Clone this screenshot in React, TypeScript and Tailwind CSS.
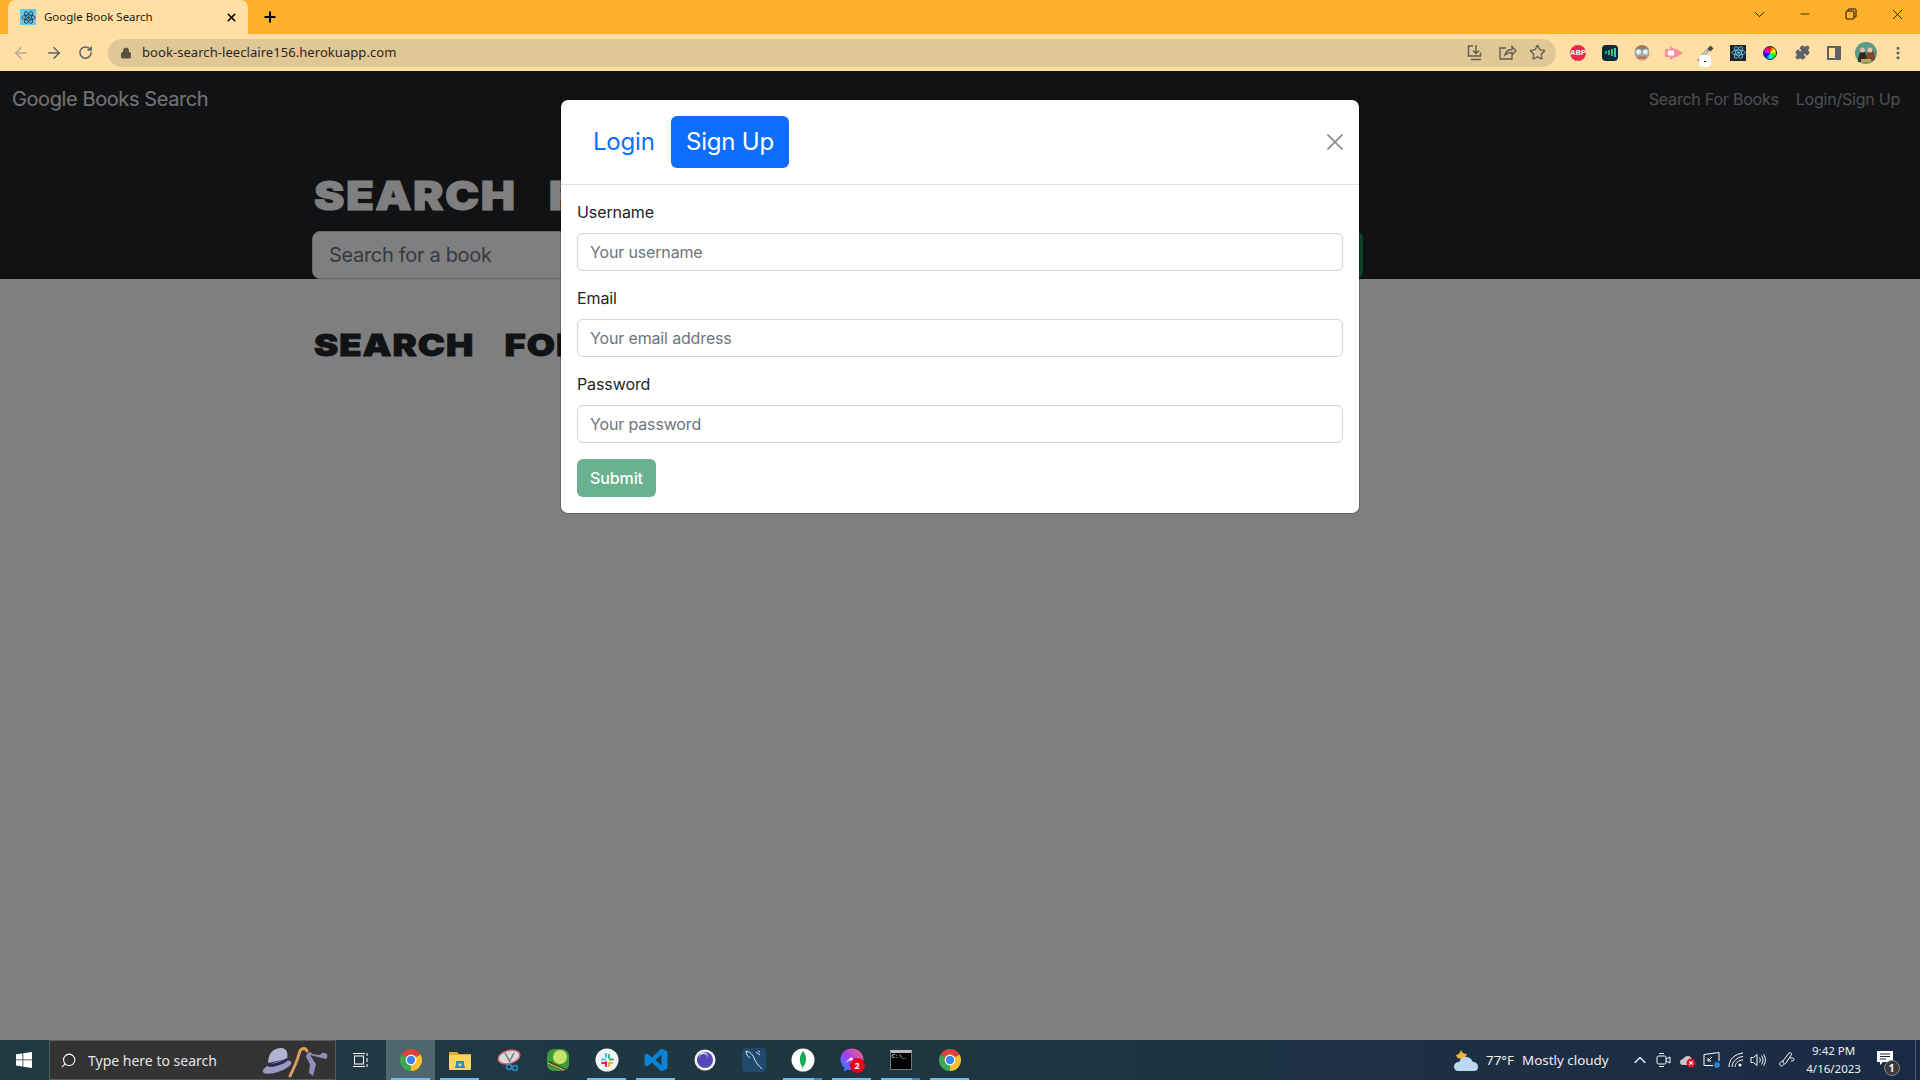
import React from "react";
import { ArrowLeft, ArrowRight, RotateCw, Lock, Star, X, Plus, Minus, ChevronDown, ChevronUp, Search, Puzzle, MoreVertical } from "lucide-react";

const Atom = ({ color, size = 16 }: { color: string; size?: number }) => (
  <svg width={size} height={size} viewBox="0 0 24 24" fill="none" stroke={color} strokeWidth="1.3">
    <ellipse cx="12" cy="12" rx="10.5" ry="4.2" />
    <ellipse cx="12" cy="12" rx="10.5" ry="4.2" transform="rotate(60 12 12)" />
    <ellipse cx="12" cy="12" rx="10.5" ry="4.2" transform="rotate(120 12 12)" />
    <circle cx="12" cy="12" r="2" fill={color} stroke="none" />
  </svg>
);

const ChromeLogo = () => (
  <svg width="24" height="24" viewBox="0 0 24 24">
    <path d="M12 12L2.47 6.5A11 11 0 0 1 21.53 6.5Z" fill="#db4437" />
    <path d="M12 12L21.53 6.5A11 11 0 0 1 12 23Z" fill="#fbc02d" />
    <path d="M12 12L12 23A11 11 0 0 1 2.47 6.5Z" fill="#3da751" />
    <circle cx="12" cy="12" r="5.4" fill="#fff" />
    <circle cx="12" cy="12" r="4.2" fill="#3f84ea" />
  </svg>
);

const Ext = ({ children }: { children: React.ReactNode }) => (
  <div className="relative w-8 h-full flex items-center justify-center">{children}</div>
);

const Toolbar = () => (
  <div className="h-[37px] bg-[#ffdfa3] flex items-center shrink-0">
    <div className="w-[108px] flex items-center pl-[12px] gap-[15px] shrink-0">
      <ArrowLeft size={18} className="text-[#b5aa94]" strokeWidth={2} />
      <ArrowRight size={18} className="text-[#5f6368]" strokeWidth={2} />
      <RotateCw size={15} className="text-[#5f6368]" strokeWidth={2.4} />
    </div>
    <div className="w-[1448px] h-7 rounded-full bg-[#dfc796] flex items-center pl-[12px] pr-[10px] shrink-0">
      <Lock size={12} className="text-[#5a5240] mr-[10px]" fill="#5a5240" />
      <span className="text-[13px] tracking-[0.06px] text-[#2b2618] font-['Noto_Sans','Open_Sans',sans-serif]">book-search-leeclaire156.herokuapp.com</span>
      <div className="ml-auto flex items-center gap-[12px] text-[#5f5a4d]">
        <svg width="20" height="20" viewBox="0 0 20 20" fill="none" stroke="currentColor" strokeWidth="1.4">
          <path d="M8 3H3.5v10h12V9.5M11 2v8M8 7.5l3 3 3-3M6 16.5h10" />
        </svg>
        <svg width="20" height="20" viewBox="0 0 20 20" fill="none" stroke="currentColor" strokeWidth="1.3">
          <path d="M9 5H3v11h12v-4M8 12c1-4 4-5.500 7-5.500V3.500l4 4.500-4 4V9.500c-2.500 0-5 .5-7 2.500Z" />
        </svg>
        <Star size={17} strokeWidth={1.8} />
      </div>
    </div>
    <div className="flex items-center h-full pl-[6px]">
      <Ext>
        <div className="w-4 h-4 rounded-full bg-[#f0274b] text-white text-[7.5px] font-bold flex items-center justify-center font-['Liberation_Sans',sans-serif]">ABP</div>
      </Ext>
      <Ext>
        <div className="w-4 h-4 rounded-sm bg-[#0d2b3e] flex items-center justify-center gap-px">
          <div className="w-[2px] h-[3px] bg-[#1fa67a]" />
          <div className="w-[2px] h-[5px] bg-[#2bb98a]" />
          <div className="w-[2px] h-[7px] bg-[#34c08f]" />
          <div className="w-[2px] h-[9px] bg-[#52c69a]" />
        </div>
      </Ext>
      <Ext>
        <svg width="18" height="18" viewBox="0 0 18 18">
          <circle cx="9" cy="9" r="7.5" fill="#c9977a" />
          <path d="M2 7a7 6 0 0 1 14 0Z" fill="#9b7a60" />
          <circle cx="5.600" cy="8" r="3" fill="#e6f2f2" stroke="#7fb4c4" strokeWidth="1" />
          <circle cx="12.400" cy="8" r="3" fill="#e6f2f2" stroke="#7fb4c4" strokeWidth="1" />
          <path d="M5 13.500h8" stroke="#a86a55" strokeWidth="1.500" />
        </svg>
      </Ext>
      <Ext>
        <svg width="18" height="14" viewBox="0 0 18 14">
          <path d="M0 3h5V0l5 3h2l6 4-6 4h-2l-5 3v-3H0Z" fill="#ff8f9c" />
          <path d="M3 4.500h6v5H3Z" fill="#fff" />
        </svg>
      </Ext>
      <Ext>
        <svg width="18" height="18" viewBox="0 0 18 18" fill="none">
          <path d="M2 16L11 6" stroke="#9a9a9a" strokeWidth="3" strokeLinecap="round" />
          <path d="M3 15L10 7" stroke="#fff" strokeWidth="1" />
          <path d="M10.500 4.500l3-3 3 3-3 3Z" fill="#4a4a4a" />
        </svg>
        <div className="absolute left-[9px] top-[21px] w-3 h-3 rounded-sm bg-white flex items-center justify-center">
          <div className="w-[2px] h-px bg-black" />
        </div>
      </Ext>
      <Ext>
        <div className="w-4 h-4 bg-[#20232a] flex items-center justify-center">
          <Atom color="#61dafb" size={15} />
        </div>
      </Ext>
      <Ext>
        <div className="w-[14px] h-[14px] rounded-full bg-[conic-gradient(#f00,#ff0,#0f0,#0ff,#00f,#f0f,#f00)] border border-[#222]" />
      </Ext>
      <Ext>
        <Puzzle size={15} className="text-[#5f6368]" fill="#5f6368" />
      </Ext>
      <Ext>
        <div className="w-[14px] h-[14px] border-[2px] border-r-[6px] border-[#5f6368]" />
      </Ext>
      <Ext>
        <svg width="22" height="22" viewBox="0 0 22 22">
          <circle cx="11" cy="11" r="11" fill="#5d9a86" />
          <path d="M3 20c0-6 2-11 5-11s4 4 4 11Z" fill="#2d2a26" />
          <path d="M11 20c0-7 2-13 5-13s4 6 4 11Z" fill="#7a4a2c" />
          <circle cx="7.500" cy="8" r="2.500" fill="#e3bd9f" />
          <circle cx="15" cy="8" r="2.500" fill="#e8c6a8" />
          <path d="M6 20h10v-3H6Z" fill="#c9a24a" />
        </svg>
      </Ext>
      <Ext>
        <MoreVertical size={16} className="text-[#5f6368]" strokeWidth={2.6} />
      </Ext>
    </div>
  </div>
);

const TabStrip = () => (
  <div className="h-[34px] bg-[#ffb12c] flex items-end shrink-0 pl-2 text-black">
    <div className="w-[240px] h-[34px] bg-[#ffdfa3] rounded-t-lg flex items-center pl-3 pr-2">
      <div className="w-4 h-4 bg-[#5fc8ec] flex items-center justify-center">
        <Atom color="#20323c" size={15} />
      </div>
      <span className="ml-2 text-[11.5px] text-[#1d1a12] font-['Noto_Sans','Open_Sans',sans-serif]">Google Book Search</span>
      <X size={13} className="ml-auto mr-[2px]" strokeWidth={3} />
    </div>
    <div className="h-[34px] flex items-center ml-[14px]">
      <Plus size={16} strokeWidth={3} />
    </div>
    <div className="ml-auto h-full flex items-center pb-[6px] text-[#111111]">
      <div className="w-[46px] flex justify-center"><ChevronDown size={17} strokeWidth={1.3} /></div>
      <div className="w-[46px] flex justify-center"><Minus size={14} strokeWidth={1.4} /></div>
      <div className="w-[46px] flex justify-center">
        <svg width="12" height="12" viewBox="0 0 12 12" fill="none" stroke="currentColor" strokeWidth="1">
          <rect x="1" y="3" width="8" height="8" rx="1" />
          <path d="M3 3V1.500A.5.5 0 0 1 3.500 1H10.500A.5.5 0 0 1 11 1.500V8.500A.5.5 0 0 1 10.500 9H9" />
        </svg>
      </div>
      <div className="w-[46px] flex justify-center"><X size={17} strokeWidth={1.2} /></div>
    </div>
  </div>
);

const PageBehind = () => (
  <div className="h-full bg-white font-['Inter',sans-serif]">
    <div className="h-[208px] bg-[#212529] overflow-hidden">
      <nav className="h-[56px] flex items-center justify-between pl-3 pr-[20px]">
        <span className="text-[20px] tracking-[-0.4px] text-white/90">Google Books Search</span>
        <div className="flex gap-[17px] text-[16px] tracking-[-0.22px] text-white/55">
          <span>Search For Books</span>
          <span>Login/Sign Up</span>
        </div>
      </nav>
      <div className="w-[1064px] ml-[314px]">
        <h1 className="text-[40px] leading-[48px] font-black text-white tracking-[1.2px] [word-spacing:19px] mt-[45px] mb-[11px] origin-left scale-x-[1.145] [-webkit-text-stroke:1px_white] whitespace-nowrap">SEARCH FOR BOOKS!</h1>
        <div className="flex -ml-[2px] w-[1051px] h-[48px]">
          <div className="flex-1 bg-white border border-[#ced4da] rounded-l-lg flex items-center pl-4 text-[20px] tracking-[-0.32px] text-[#6c757d]">Search for a book</div>
          <div className="w-[120px] bg-[#198754] rounded-r-lg" />
        </div>
      </div>
    </div>
    <h2 className="ml-[314px] mt-[48px] text-[30px] leading-[36px] font-black text-[#212529] tracking-[0.8px] [word-spacing:18px] origin-left scale-x-[1.215] [-webkit-text-stroke:0.8px_#212529] whitespace-nowrap">SEARCH FOR A BOOK TO BEGIN</h2>
  </div>
);

const Field = ({ label, placeholder }: { label: string; placeholder: string }) => (
  <div className="mb-4">
    <label className="block text-[16px] leading-[23px] mb-[9px] tracking-[-0.1px] text-[#212529]">{label}</label>
    <input
      readOnly
      placeholder={placeholder}
      className="block w-full h-[38px] px-3 text-[16px] tracking-[-0.15px] border border-[#ced4da] rounded-md placeholder:text-[#6c757d] outline-none bg-white"
    />
  </div>
);

const Modal = () => (
  <div className="absolute inset-0 bg-black/50 flex justify-center items-start pt-[28px] font-['Inter',sans-serif]">
    <div className="w-[800px] bg-white bg-clip-padding border border-black/20 rounded-lg">
      <div className="flex items-center justify-between p-4 border-b border-[#dee2e6]">
        <div className="flex text-[24px] tracking-[-0.2px]">
          <div className="h-[52px] w-[94px] pl-4 flex items-center text-[#0d6efd]">Login</div>
          <div className="h-[52px] w-[118px] flex items-center justify-center text-white bg-[#0d6efd] rounded-md">Sign Up</div>
        </div>
        <svg width="16" height="16" viewBox="0 0 16 16" fill="none" stroke="#8a8a8a" strokeWidth="1.6">
          <path d="M.5.5l15 15M15.500.5l-15 15" />
        </svg>
      </div>
      <div className="p-4">
        <Field label="Username" placeholder="Your username" />
        <Field label="Email" placeholder="Your email address" />
        <Field label="Password" placeholder="Your password" />
        <button className="h-[38px] w-[79px] rounded-md bg-[#198754]/65 text-white text-[16px] font-medium tracking-[-0.1px]">Submit</button>
      </div>
    </div>
  </div>
);

const TaskItem = ({ children, line, active, split }: { children?: React.ReactNode; line?: boolean; active?: boolean; split?: boolean }) => (
  <div className={`relative w-[49px] h-full flex items-center justify-center shrink-0 ${active ? "bg-[#4f666d]" : ""}`}>
    {children}
    {line && <div className="absolute bottom-0 left-[5px] right-[5px] h-[2px] bg-[#76b9ed]" />}
    {split && <div className="absolute bottom-0 right-[5px] w-[8px] h-[2px] bg-[#4a86b0]" />}
  </div>
);

const Taskbar = () => (
  <div className="h-10 shrink-0 flex items-center text-white bg-gradient-to-r from-[#203943] via-[#1f3641] to-[#1a2a44] font-['Noto_Sans','Open_Sans',sans-serif]">
    <div className="w-[48px] h-full flex items-center justify-center shrink-0">
      <svg width="16" height="16" viewBox="0 0 16 16" fill="#fff">
        <path d="M0 2.300L6.500 1.400V7.500H0ZM7.300 1.300L16 0V7.500H7.300ZM0 8.300H6.500V14.500L0 13.600ZM7.300 8.300H16V16L7.300 14.700Z" />
      </svg>
    </div>
    <div className="ml-px w-[287px] h-full bg-[#333333] border border-[#5a5a5a] flex items-center pl-[10px] relative shrink-0">
      <Search size={17} className="text-white -scale-x-100" strokeWidth={1.5} />
      <span className="ml-[11px] text-[14px] text-[#e6e6e6]">Type here to search</span>
      <svg className="absolute right-[5px] top-[2px]" width="68" height="36" viewBox="0 0 68 36" fill="none">
        <ellipse cx="15" cy="24" rx="15" ry="5" fill="#9a99c4" transform="rotate(-18 15 24)" />
        <path d="M6 20c0-10 6-15 13-15s7 7 6 11Z" fill="#b3b2d3" />
        <path d="M6 21c6 0 13-2 19-6l.5 3c-6 4-13 6-19 6Z" fill="#2a2a55" />
        <path d="M28 33c3-6 7-14 9-22 1-6 6-7 8-3" stroke="#d6a05c" strokeWidth="3" strokeLinecap="round" />
        <path d="M48 12l6 9-3 12-4-3 1-9-4-7c0-3 2-4 4-5l15 1c3 1 3 4 1 6Z" fill="#8e8eb8" />
        <path d="M48 8l11 1c1 1 0 3-2 3l-7-1Z" fill="#333333" />
      </svg>
    </div>
    <div className="w-[50px] h-full flex items-center justify-center shrink-0">
      <svg width="16" height="16" viewBox="0 0 16 16" fill="none" stroke="#fff" strokeWidth="1">
        <rect x="1.500" y="4" width="9" height="8" />
        <path d="M0 1.500h12M0 14.500h12M14 1v3M14 6v4M14 12v3" />
      </svg>
    </div>
    <TaskItem active line><ChromeLogo /></TaskItem>
    <TaskItem line>
      <svg width="22" height="20" viewBox="0 0 22 20">
        <path d="M0 2h8l2 2h12v3H0Z" fill="#e5ad2c" />
        <rect x="0" y="5" width="22" height="15" rx="1" fill="#fcd462" />
        <path d="M7 16v-5h8v5h-2.500v-2.500h-3V16Z" fill="#2f88d0" />
        <rect x="6" y="16" width="10" height="2" fill="#2f88d0" />
      </svg>
    </TaskItem>
    <TaskItem>
      <svg width="24" height="24" viewBox="0 0 24 24" fill="none">
        <ellipse cx="12" cy="9" rx="11" ry="6.500" fill="#d9d9d9" stroke="#d9606a" strokeWidth="1.500" transform="rotate(-15 12 9)" />
        <path d="M8 5l5 9M17 5l-5 9" stroke="#777" strokeWidth="1.500" />
        <circle cx="12" cy="19" r="2.500" stroke="#2f8ec9" strokeWidth="1.500" />
        <circle cx="18" cy="20" r="2.500" stroke="#2f8ec9" strokeWidth="1.500" />
      </svg>
    </TaskItem>
    <TaskItem>
      <svg width="24" height="24" viewBox="0 0 24 24">
        <rect x="1" y="1" width="22" height="22" rx="7" fill="#3a9d3a" />
        <circle cx="14" cy="9" r="7" fill="#c8e46a" />
        <path d="M3 13l17 8-2 2L2 16Z" fill="#5a3d1e" />
        <path d="M2 15l16 7" stroke="#e5d28a" strokeWidth="1" />
      </svg>
    </TaskItem>
    <TaskItem line>
      <svg width="24" height="24" viewBox="0 0 24 24">
        <circle cx="12" cy="12" r="11.500" fill="#f4f4f4" />
        <rect x="6" y="10.500" width="5" height="2" rx="1" fill="#36c5f0" />
        <rect x="10" y="5" width="2" height="5" rx="1" fill="#36c5f0" />
        <rect x="13" y="6" width="2" height="5" rx="1" fill="#2eb67d" />
        <rect x="14" y="10.500" width="5" height="2" rx="1" fill="#2eb67d" />
        <rect x="13" y="14" width="5" height="2" rx="1" fill="#ecb22e" />
        <rect x="13" y="14" width="2" height="5" rx="1" fill="#ecb22e" />
        <rect x="10" y="13" width="2" height="6" rx="1" fill="#e01e5a" />
        <rect x="6" y="14" width="5" height="2" rx="1" fill="#e01e5a" />
      </svg>
    </TaskItem>
    <TaskItem line>
      <svg width="24" height="24" viewBox="0 0 24 24">
        <path d="M17.500 0.500L23.500 3.500V20.500L17.500 23.500L8 14.500L3 18.500L0.500 17V7L3 5.500L8 9.500ZM17.500 6.800L11.500 12L17.500 17.200Z" fill="#0a84d6" />
        <path d="M3 9v6l3-3Z" fill="#0a84d6" />
      </svg>
    </TaskItem>
    <TaskItem>
      <svg width="22" height="22" viewBox="0 0 22 22">
        <circle cx="11" cy="11" r="10.500" fill="#f5f5f5" />
        <circle cx="11" cy="11" r="8" fill="#5348b8" />
        <circle cx="9.500" cy="8" r="4.500" fill="#e8e6f7" />
        <circle cx="9.500" cy="9.500" r="4.500" fill="#5348b8" />
      </svg>
    </TaskItem>
    <TaskItem>
      <svg width="24" height="24" viewBox="0 0 24 24" fill="none">
        <rect width="24" height="24" rx="4" fill="#1f4a6e" />
        <path d="M4 3c3 1 6 2 8 7s4 7 8 11M4 3c0 3 2 6 4 7M14 4l4 3M16 3l2 1" stroke="#dce6ee" strokeWidth="1" />
      </svg>
    </TaskItem>
    <TaskItem line split>
      <svg width="24" height="24" viewBox="0 0 24 24">
        <circle cx="12" cy="12" r="11.500" fill="#fff" />
        <path d="M12 3c4 4 4 12 0 16v2h-.500v-2c-3.500-4-3.500-12 .5-16Z" fill="#13aa52" />
      </svg>
    </TaskItem>
    <TaskItem line>
      <div className="relative">
        <svg width="24" height="24" viewBox="0 0 24 24">
          <defs>
            <linearGradient id="m" x1="0" y1="1" x2="1" y2="0">
              <stop offset="0" stopColor="#1f8cff" />
              <stop offset=".5" stopColor="#a33ef0" />
              <stop offset="1" stopColor="#ff6a68" />
            </linearGradient>
          </defs>
          <path d="M12 0.500C5.500 0.500 0.500 5.300 0.500 11.500c0 3.300 1.400 6.100 3.600 8v4l3.700-2c1.300.4 2.700.6 4.200.6 6.500 0 11.500-4.800 11.500-10.600S18.500.5 12 .5Z" fill="url(#m)" />
          <path d="M5 15l6-6 3 3 5-3-6 6-3-3Z" fill="#fff" />
        </svg>
        <div className="absolute -right-[1px] -bottom-[1px] w-[15px] h-[15px] rounded-full bg-[#e8001c] text-white text-[9px] font-bold flex items-center justify-center">2</div>
      </div>
    </TaskItem>
    <TaskItem line split>
      <div className="w-[22px] h-[20px] bg-black border border-[#777] border-t-[3px] border-t-[#bbb] text-[6px] leading-[8px] pl-px font-['Liberation_Mono',monospace]">C:\_</div>
    </TaskItem>
    <TaskItem line><ChromeLogo /></TaskItem>

    <div className="ml-[479px] flex items-center h-full shrink-0">
      <svg width="26" height="24" viewBox="0 0 26 24">
        <path d="M8 2c1 3 3 4 6 4-1 3-3 5-6 5S3 8 3 7c2 0 4-2 5-5Z" fill="#f0b33c" />
        <path d="M1 19c0-3 2-5 5-5 1-3 4-5 7-5 4 0 6 3 7 5 3 0 5 2 5 5s-2 4-4 4H5c-2 0-4-2-4-4Z" fill="#bcd8f2" />
      </svg>
      <span className="ml-[7px] text-[13.4px] text-[#f0f0f0]">77°F</span>
      <span className="ml-[8px] text-[13.4px] text-[#f0f0f0]">Mostly cloudy</span>
    </div>
    <div className="ml-[21px] flex items-center h-full shrink-0 text-white">
      <ChevronUp size={20} strokeWidth={1.4} />
      <div className="ml-[2px] w-6 flex justify-center">
        <svg width="16" height="16" viewBox="0 0 16 16" fill="none" stroke="#fff" strokeWidth="1">
          <rect x="1" y="4" width="9" height="8" rx="1.500" />
          <path d="M10 7l4-2v6l-4-2M3 1.500h5M3 14.500h5" />
        </svg>
      </div>
      <div className="w-6 flex justify-center relative">
        <svg width="18" height="16" viewBox="0 0 18 16">
          <path d="M1 10c0-2 2-3 3-3 1-2 3-3 5-3s4 2 4 4c1 0 2 1 2 2s-1 3-3 3H4c-2 0-3-1-3-3Z" fill="#c8c8c8" />
          <circle cx="12" cy="11" r="4.500" fill="#e0142c" />
          <path d="M10.300 9.300l3.400 3.400M13.700 9.300l-3.400 3.400" stroke="#fff" strokeWidth="1.200" />
        </svg>
      </div>
      <div className="w-6 flex justify-center">
        <svg width="18" height="18" viewBox="0 0 18 18" fill="none" stroke="#fff" strokeWidth="1">
          <path d="M1 3.500L16 1.500V10M1 3.500V14.500H10" />
          <path d="M5 10l4-4M5 7v3h3" />
          <circle cx="14" cy="14" r="3" fill="#2f84d2" stroke="none" />
        </svg>
      </div>
      <div className="w-6 flex justify-center">
        <svg width="16" height="16" viewBox="0 0 16 16" fill="none" stroke="#fff" strokeWidth="1">
          <path d="M1 15C1 7 7 2 15 1M4 15c0-5 5-10 11-10.500M7 15c0-3 3-7 8-7" />
          <circle cx="12" cy="13" r="1.500" fill="#fff" stroke="none" />
        </svg>
      </div>
      <div className="w-6 flex justify-center -ml-[2px]">
        <svg width="16" height="16" viewBox="0 0 16 16" fill="none" stroke="#fff" strokeWidth="1">
          <path d="M1 5.500h2.500L7 2.500v11L3.500 10.500H1ZM9.500 5.500c1 1.500 1 3.500 0 5M11.500 3.500c2 3 2 6 0 9M13.500 2c2.500 4 2.500 8 0 12" />
        </svg>
      </div>
      <div className="ml-[5px] w-6 flex justify-center">
        <svg width="18" height="18" viewBox="0 0 18 18" fill="none" stroke="#fff" strokeWidth="1">
          <path d="M5 10L11 2c1-1 3 0 2.500 1.500L8 12c-1 1.500-3 1-3-2ZM5 10c-2 0-4 2-3 4s3 1 4-1M12 7c2 0 4 0 4 1.500S14 10 13 10" />
        </svg>
      </div>
    </div>
    <div className="ml-[4px] w-[62px] shrink-0 text-center text-[11.5px] leading-[18px] text-[#f0f0f0]">
      <div>9:42 PM</div>
      <div>4/16/2023</div>
    </div>
    <div className="ml-[12px] relative w-[24px] h-full flex items-center shrink-0">
      <svg width="16" height="15" viewBox="0 0 16 15" className="-mt-[4px]">
        <path d="M0 0h16v11H6L3 14v-3H0Z" fill="#fff" />
        <path d="M3 3h10M3 5.500h10M3 8h6" stroke="#1a2a44" strokeWidth="1" />
      </svg>
      <div className="absolute left-[7px] top-[20px] w-[16px] h-[16px] rounded-full bg-[#3b3b3b] border border-[#888] text-[10px] font-bold flex items-center justify-center">1</div>
    </div>
    <div className="ml-auto mr-[4px] w-px h-full bg-[#4a5a70]" />
  </div>
);

export default function App() {
  return (
    <div className="h-screen w-screen overflow-hidden flex flex-col">
      <TabStrip />
      <Toolbar />
      <main className="relative flex-1 min-h-0 overflow-hidden">
        <PageBehind />
        <Modal />
      </main>
      <Taskbar />
    </div>
  );
}
